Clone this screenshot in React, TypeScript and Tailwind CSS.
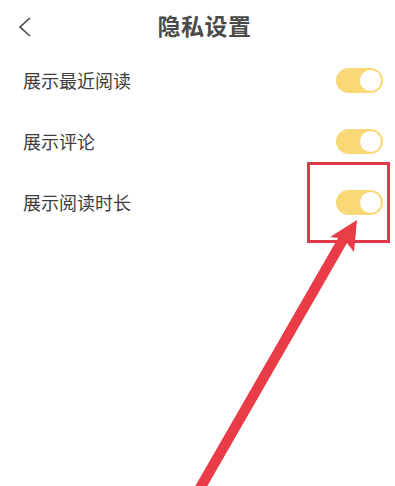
import React from "react";

const rows = ["展示最近阅读", "展示评论", "展示阅读时长"];

const Toggle = () => (
	<div className="w-[47px] h-[25px] rounded-full bg-[#f9d878] flex items-center justify-end pr-[2px]">
		<div className="w-[21px] h-[21px] rounded-full bg-white" />
	</div>
);

const App = () => {
	return (
		<div
			className="relative w-[395px] h-[486px] bg-white overflow-hidden"
			style={{ fontFamily: '"Noto Sans CJK SC", "Noto Sans", sans-serif' }}
		>
			<header className="relative h-[50px] flex items-center justify-center pl-[14px]">
				<svg
					className="absolute left-[17px] top-[16px]"
					width="16"
					height="22"
					viewBox="0 0 16 22"
					fill="none"
				>
					<path d="M13 2 L3 11 L13 20" stroke="#444" strokeWidth="1.6" />
				</svg>
				<h1 className="text-[23px] font-bold text-[#4a4a4a] leading-none tracking-[0.5px]">
					隐私设置
				</h1>
			</header>
			<ul className="list-none">
				{rows.map((row) => (
					<li
						key={row}
						className="h-[61px] flex items-center justify-between pl-[23px] pr-[12px]"
					>
						<span className="text-[18px] text-[#3d3d3d]">{row}</span>
						<Toggle />
					</li>
				))}
			</ul>
			<div className="absolute left-[307px] top-[162px] w-[83px] h-[81px] border-[3px] border-[#e2384a]" />
			<svg
				className="absolute left-0 top-0"
				width="395"
				height="486"
				viewBox="0 0 395 486"
			>
				<polygon
					points="357,220 354,252 347,243 205,490 193,490 338,238 330,237"
					fill="#ea3c46"
				/>
			</svg>
		</div>
	);
};

export default App;
